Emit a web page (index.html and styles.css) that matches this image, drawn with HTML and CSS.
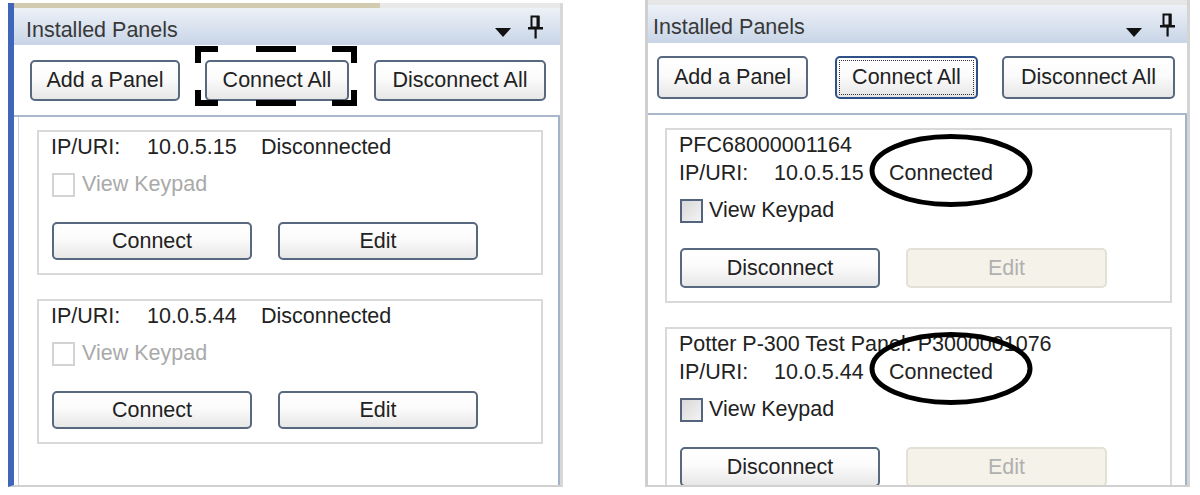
FILE: index.html
```html
<!DOCTYPE html>
<html>
<head>
<meta charset="utf-8">
<link rel="stylesheet" href="styles.css">
</head>
<body>
<div class="stage">
  <section class="panel panel-left">
    <div class="frame">
      <div class="topband"></div>
      <header class="phead">
        <span class="ptitle">Installed Panels</span>
        <svg class="tri" width="16" height="9" viewBox="0 0 16 9"><polygon points="0,0 16,0 8,9" fill="#111"/></svg>
        <svg class="pin" width="15" height="24" viewBox="0 0 15 24"><rect x="3.5" y="1.5" width="7" height="11" fill="none" stroke="#111" stroke-width="2"/><rect x="8.5" y="1" width="3" height="12" fill="#111"/><rect x="0" y="12" width="15" height="2.5" fill="#111"/><rect x="6.5" y="14" width="2.2" height="9.5" fill="#111"/></svg>
      </header>
      <div class="toolbar">
        <button class="btn tb-add">Add a Panel</button>
        <button class="btn tb-conn">Connect All</button>
        <button class="btn tb-disc">Disconnect All</button>
      </div>
      <div class="content">
        <div class="card">
          <div class="line"><span class="lbl">IP/URI:</span><span class="ip">10.0.5.15</span><span>Disconnected</span></div>
          <div class="chk disabled"><span class="box"></span><span>View Keypad</span></div>
          <div class="actions"><button class="btn act">Connect</button><button class="btn act">Edit</button></div>
        </div>
        <div class="card">
          <div class="line"><span class="lbl">IP/URI:</span><span class="ip">10.0.5.44</span><span>Disconnected</span></div>
          <div class="chk disabled"><span class="box"></span><span>View Keypad</span></div>
          <div class="actions"><button class="btn act">Connect</button><button class="btn act">Edit</button></div>
        </div>
      </div>
    </div>
  </section>

  <section class="panel panel-right">
    <div class="frame">
      <div class="topband"></div>
      <header class="phead">
        <span class="ptitle">Installed Panels</span>
        <svg class="tri" width="16" height="9" viewBox="0 0 16 9"><polygon points="0,0 16,0 8,9" fill="#111"/></svg>
        <svg class="pin" width="15" height="24" viewBox="0 0 15 24"><rect x="3.5" y="1.5" width="7" height="11" fill="none" stroke="#111" stroke-width="2"/><rect x="8.5" y="1" width="3" height="12" fill="#111"/><rect x="0" y="12" width="15" height="2.5" fill="#111"/><rect x="6.5" y="14" width="2.2" height="9.5" fill="#111"/></svg>
      </header>
      <div class="toolbar">
        <button class="btn tb-add">Add a Panel</button>
        <button class="btn tb-conn focus">Connect All</button>
        <button class="btn tb-disc">Disconnect All</button>
      </div>
      <div class="content">
        <div class="card">
          <div class="line">PFC68000001164</div>
          <div class="line"><span class="lbl">IP/URI:</span><span class="ip">10.0.5.15</span><span>Connected</span></div>
          <div class="chk"><span class="box"></span><span>View Keypad</span></div>
          <div class="actions"><button class="btn act">Disconnect</button><button class="btn act disabled">Edit</button></div>
        </div>
        <div class="card">
          <div class="line">Potter P-300 Test Panel: P3000001076</div>
          <div class="line"><span class="lbl">IP/URI:</span><span class="ip">10.0.5.44</span><span>Connected</span></div>
          <div class="chk"><span class="box"></span><span>View Keypad</span></div>
          <div class="actions"><button class="btn act">Disconnect</button><button class="btn act disabled">Edit</button></div>
        </div>
      </div>
    </div>
  </section>

  <svg class="overlay" width="1200" height="495" viewBox="0 0 1200 495">
    <path d="M198,63 V49 H218 M256,49 H296 M332,49 H354 V63 M198,90 V103 H218 M256,103 H296 M332,103 H354 V90" fill="none" stroke="#000" stroke-width="6"/>
    <ellipse cx="951" cy="170.5" rx="79" ry="34" fill="none" stroke="#000" stroke-width="5"/>
    <ellipse cx="951" cy="368.5" rx="79" ry="34" fill="none" stroke="#000" stroke-width="5"/>
  </svg>
</div>
</body>
</html>
```

FILE: styles.css
```css
html, body {
  margin: 0;
  background: #fff;
}
body {
  font-family: "Liberation Sans", Arial, sans-serif;
  font-size: 21.5px;
  color: #222;
}
.stage {
  position: relative;
  width: 1200px;
  height: 495px;
  display: flex;
  align-items: flex-start;
  padding-left: 8px;
  box-sizing: border-box;
  overflow: hidden;
}
.panel {
  display: flex;
  flex-direction: column;
  box-sizing: border-box;
  height: 487px;
  flex: none;
}
.panel-left {
  width: 555px;
  padding-top: 3px;
}
.panel-right {
  width: 545px;
  margin-left: 82px;
}
.frame {
  flex: 1;
  display: flex;
  flex-direction: column;
  min-height: 0;
  border-bottom: 2px solid #d0d0d0;
}
.panel-left .frame {
  border-left: 6px solid #3f66b8;
  border-right: 3px solid #d8d8d8;
}
.panel-right .frame {
  border-left: 3px solid #cfcfcf;
  border-right: 3px solid #d4d4d4;
}
.topband {
  height: 5px;
  flex: none;
}
.panel-left .topband {
  background: linear-gradient(to right, #d3cbb0 0, #d3cbb0 366px, #e8e8e8 366px);
}
.panel-right .topband {
  background: #e6e6e6;
}
.phead {
  flex: none;
  display: flex;
  align-items: flex-start;
  background: linear-gradient(#edf1f7, #c8d5e7);
  color: #383838;
}
.panel-left .phead {
  height: 37px;
  padding-left: 12px;
}
.panel-right .phead {
  height: 38px;
  padding-left: 5px;
}
.ptitle {
  flex: 1;
  padding-top: 10px;
  line-height: 24px;
}
.tri {
  margin-top: 20px;
  flex: none;
}
.pin {
  margin-top: 7px;
  margin-left: 17px;
  flex: none;
}
.panel-left .pin { margin-right: 17px; }
.panel-right .tri { margin-top: 23px; }
.panel-right .pin { margin-top: 8px; margin-left: 18px; margin-right: 12px; }

.toolbar {
  flex: none;
  display: flex;
  align-items: flex-start;
  height: 70px;
  box-sizing: border-box;
  border-bottom: 2px solid #a9b7ca;
  background: #fff;
}
.panel-left .toolbar {
  padding: 15px 0 0 16px;
  height: 72px;
}
.panel-right .toolbar {
  padding: 13px 0 0 9px;
  height: 72px;
}
.btn {
  font: inherit;
  color: #222;
  border: 2px solid #57687f;
  border-radius: 5px;
  background: linear-gradient(#ffffff, #fbfbfb 45%, #e7e7e7);
  padding: 0;
  box-sizing: border-box;
  flex: none;
}
.panel-left .tb-add { width: 150px; height: 41px; }
.panel-left .tb-conn { width: 144px; height: 41px; margin-left: 25px; }
.panel-left .tb-disc { width: 172px; height: 41px; margin-left: 25px; }
.panel-right .tb-add { width: 151px; height: 43px; }
.panel-right .tb-conn { width: 143px; height: 43px; margin-left: 27px; }
.panel-right .tb-disc { width: 173px; height: 43px; margin-left: 24px; }
.btn.focus {
  position: relative;
  border-color: #2f5189;
}
.btn.focus::after {
  content: "";
  position: absolute;
  left: 2px;
  right: 2px;
  top: 2px;
  bottom: 2px;
  border: 1px dotted #333;
}

.content {
  flex: 1;
  min-height: 0;
  overflow: hidden;
  background: #fff;
  padding-top: 13px;
  border-right: 2px solid #a3b2c6;
}
.panel-left .content {
  margin-left: 4px;
  border-left: 1px solid #c9d0da;
}
.card {
  border: 2px solid #d9d9d9;
  padding: 1px 12px 13px;
  box-sizing: border-box;
}
.panel-left .card { margin-left: 18px; width: 506px; }
.panel-right .card { margin-left: 17px; width: 507px; }
.card + .card { margin-top: 24px; }
.line {
  line-height: 28px;
  white-space: nowrap;
}
.lbl, .ip { display: inline-block; }
.panel-left .lbl { width: 96px; }
.panel-left .ip { width: 114px; }
.panel-right .lbl { width: 95px; }
.panel-right .ip { width: 115px; }
.chk {
  display: flex;
  align-items: center;
  gap: 6px;
  margin-top: 11px;
  margin-left: 1px;
  height: 25px;
}
.panel-left .chk { gap: 7px; }
.box {
  width: 23px;
  height: 24px;
  box-sizing: border-box;
  border: 2px solid #54637e;
  background: linear-gradient(135deg, #d9d9d9, #f3f3f3);
  flex: none;
}
.chk.disabled { color: #a9a9a9; }
.chk.disabled .box {
  border-color: #d3d3d3;
  background: #fff;
}
.actions {
  display: flex;
  gap: 26px;
  margin-top: 25px;
  margin-left: 1px;
}
.act { width: 200px; height: 40px; }
.panel-left .act { height: 38px; }
.btn.disabled {
  background: #f5f2ea;
  border-color: #e3e0d5;
  color: #b0b0b0;
}
.panel-right .act.disabled { width: 201px; }

.overlay {
  position: absolute;
  left: 0;
  top: 0;
  pointer-events: none;
}
```
